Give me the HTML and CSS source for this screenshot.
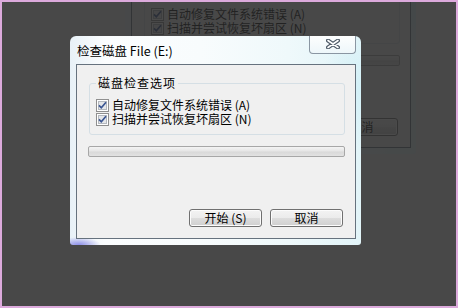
FILE: index.html
```html
<!DOCTYPE html>
<html lang="zh-CN">
<head>
<meta charset="utf-8">
<title>检查磁盘</title>
<link rel="stylesheet" href="styles.css">
</head>
<body>
<div class="screen">
  <div class="window ghost" aria-hidden="true">
    <div class="titlebar">
      <span class="title">检查磁盘 File (E:)</span>
      <span class="close"></span>
    </div>
    <div class="client">
      <fieldset class="group">
        <legend>磁盘检查选项</legend>
        <div class="check"><svg class="box" width="13" height="13" viewBox="0 0 13 13"><rect x="0.5" y="0.5" width="12" height="12" fill="#fff" stroke="#8f8f8f"/><rect x="2.5" y="2.5" width="8" height="8" fill="#e4e6e9" stroke="#b4b8be"/><path d="M3 6.3 L5.3 8.8 L10 3.2" fill="none" stroke="#3a5592" stroke-width="1.7"/></svg><span>自动修复文件系统错误 (A)</span></div>
        <div class="check"><svg class="box" width="13" height="13" viewBox="0 0 13 13"><rect x="0.5" y="0.5" width="12" height="12" fill="#fff" stroke="#8f8f8f"/><rect x="2.5" y="2.5" width="8" height="8" fill="#e4e6e9" stroke="#b4b8be"/><path d="M3 6.3 L5.3 8.8 L10 3.2" fill="none" stroke="#3a5592" stroke-width="1.7"/></svg><span>扫描并尝试恢复坏扇区 (N)</span></div>
      </fieldset>
      <div class="progress"></div>
      <div class="buttons">
        <span class="btn">开始 (S)</span>
        <span class="btn">取消</span>
      </div>
    </div>
  </div>

  <div class="dim"></div>

  <div class="window main">
    <div class="titlebar">
      <span class="title">检查磁盘 File (E:)</span>
      <span class="close"><svg width="14" height="10" viewBox="0 0 14 10"><path d="M2 1.5 L12 8.5 M12 1.5 L2 8.5" stroke="#4f5b68" stroke-width="4" stroke-linecap="round"/><path d="M2 1.5 L12 8.5 M12 1.5 L2 8.5" stroke="#ffffff" stroke-width="1.6" stroke-linecap="round"/></svg></span>
    </div>
    <div class="client">
      <fieldset class="group">
        <legend>磁盘检查选项</legend>
        <label class="check"><svg class="box" width="13" height="13" viewBox="0 0 13 13"><rect x="0.5" y="0.5" width="12" height="12" fill="#fff" stroke="#8f8f8f"/><rect x="2.5" y="2.5" width="8" height="8" fill="#e4e6e9" stroke="#b4b8be"/><path d="M3 6.3 L5.3 8.8 L10 3.2" fill="none" stroke="#3a5592" stroke-width="1.7"/></svg><span>自动修复文件系统错误 (A)</span></label>
        <label class="check"><svg class="box" width="13" height="13" viewBox="0 0 13 13"><rect x="0.5" y="0.5" width="12" height="12" fill="#fff" stroke="#8f8f8f"/><rect x="2.5" y="2.5" width="8" height="8" fill="#e4e6e9" stroke="#b4b8be"/><path d="M3 6.3 L5.3 8.8 L10 3.2" fill="none" stroke="#3a5592" stroke-width="1.7"/></svg><span>扫描并尝试恢复坏扇区 (N)</span></label>
      </fieldset>
      <div class="progress"></div>
      <div class="buttons">
        <button class="btn" type="button">开始 (S)</button>
        <button class="btn" type="button">取消</button>
      </div>
    </div>
  </div>
</div>
</body>
</html>
```

FILE: styles.css
```css
html, body {
  margin: 0;
  padding: 0;
}

body {
  font-family: "Noto Sans CJK SC", "Liberation Sans", sans-serif;
  font-size: 12px;
  color: #000;
}

.screen {
  position: relative;
  width: 458px;
  height: 308px;
  box-sizing: border-box;
  border: 2px solid #dcaadc;
  background: #f0f0f0;
  overflow: hidden;
}

.dim {
  position: absolute;
  inset: 0;
  background: rgba(40, 40, 40, 0.845);
}

.window {
  position: absolute;
  width: 291px;
  height: 209px;
  box-sizing: border-box;
  padding: 0 5px 6px 6px;
  display: flex;
  flex-direction: column;
  border-radius: 6px 6px 3px 3px;
  background:
    radial-gradient(ellipse 22px 8px at 3% 100%, #8d8ee8 0%, rgba(141, 142, 232, 0) 100%),
    radial-gradient(ellipse 40px 60px at 100% 25%, #d3f0f7 0%, rgba(211, 240, 247, 0) 100%),
    linear-gradient(to right, #e8f1f7 0%, #fbfdfe 12%, #f8fcfd 45%, #eff9fb 75%, #e2f4f8 100%);
}

.main {
  left: 68px;
  top: 34px;
}

.ghost {
  left: 123px;
  top: -57px;
}

.titlebar {
  height: 28px;
  display: flex;
  align-items: flex-start;
  flex: none;
}

.title {
  align-self: center;
  padding-left: 1px;
  font-size: 12.5px;
  line-height: 16px;
  margin-top: 1px;
  white-space: nowrap;
}

.close {
  margin-left: auto;
  width: 47px;
  height: 18px;
  box-sizing: border-box;
  border: 1px solid #8a96a2;
  border-top: none;
  border-radius: 0 0 4px 4px;
  background: linear-gradient(#fdfefe, #eef7fa);
  display: flex;
  align-items: center;
  justify-content: center;
}

.close svg {
  margin-top: -1px;
}

.client {
  flex: 1;
  border: 1px solid #66727e;
  background: #f0f0f0;
  display: flex;
  flex-direction: column;
}

.group {
  margin: 11px 10px 0 12px;
  padding: 8px 6px 8px 6px;
  border: 1px solid #d5dfe5;
  border-radius: 3px;
  min-width: 0;
}

.group legend {
  margin-left: 0;
  padding: 0 2px;
  font-size: 12px;
  line-height: 14px;
  letter-spacing: 1px;
}

.check {
  display: flex;
  align-items: center;
  gap: 3px;
  height: 14px;
  line-height: 14px;
  white-space: nowrap;
}

.box {
  flex: none;
  display: block;
}

.progress {
  margin: 11px 10px 0 11px;
  height: 11px;
  box-sizing: border-box;
  border: 1px solid #a7a7a7;
  border-radius: 2px;
  background: linear-gradient(#f4f4f4 0%, #e6e6e6 45%, #d9d9d9 55%, #e2e2e2 100%);
}

.buttons {
  margin-top: auto;
  padding: 0 12px 11px 0;
  display: flex;
  justify-content: flex-end;
  gap: 8px;
}

.btn {
  width: 73px;
  height: 18px;
  box-sizing: border-box;
  margin: 0;
  padding: 0;
  border: 1px solid #707070;
  border-radius: 3px;
  background: linear-gradient(#f3f3f3 0%, #ebebeb 50%, #dddddd 51%, #cfcfcf 100%);
  box-shadow: inset 0 0 0 1px #fcfcfc;
  font-family: "Noto Sans CJK SC", "Liberation Sans", sans-serif;
  font-size: 12px;
  line-height: 16px;
  color: #000;
  display: flex;
  align-items: center;
  justify-content: center;
}
```
